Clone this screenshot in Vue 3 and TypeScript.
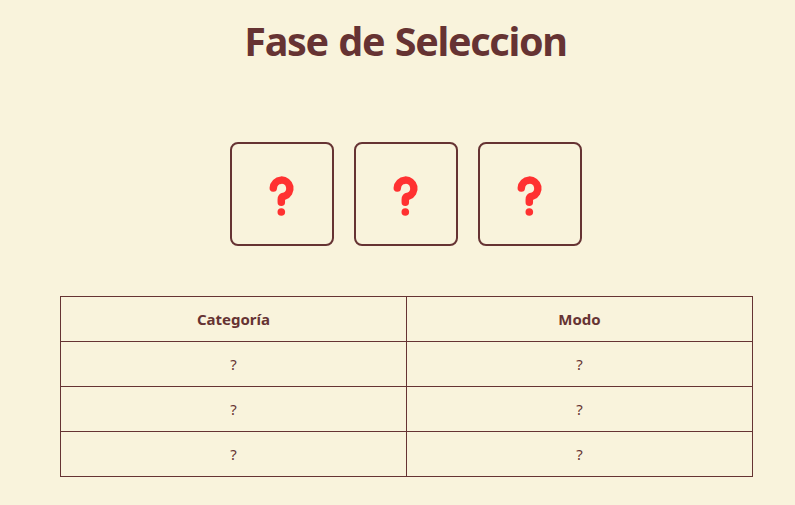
<script setup lang="ts">
interface Row {
  category: string
  mode: string
}

const slots: number[] = [1, 2, 3]
const rows: Row[] = [
  { category: '?', mode: '?' },
  { category: '?', mode: '?' },
  { category: '?', mode: '?' },
]
</script>

<template>
  <main class="page">
    <h1 class="title">Fase de Seleccion</h1>
    <div class="slots">
      <div v-for="slot in slots" :key="slot" class="slot">
        <svg class="question" viewBox="0 0 100 100" aria-hidden="true">
          <path d="M41.3 43.9 A8.3 8.3 0 1 1 52.2 52.3 Q49.3 52.8 49.3 55.6 V58.3" />
          <circle cx="49.3" cy="68" r="3.8" />
        </svg>
      </div>
    </div>
    <table class="table">
      <thead>
        <tr>
          <th>Categoría</th>
          <th>Modo</th>
        </tr>
      </thead>
      <tbody>
        <tr v-for="(row, index) in rows" :key="index">
          <td>{{ row.category }}</td>
          <td>{{ row.mode }}</td>
        </tr>
      </tbody>
    </table>
  </main>
</template>

<style>
body {
  background: #f9f3dc;
}
</style>

<style scoped>
.page {
  box-sizing: border-box;
  width: 795px;
  height: 505px;
  padding: 14px 42px 0 60px;
  background: #f9f3dc;
  color: #663333;
  font-family: "Segoe UI", "Noto Sans", "Open Sans", sans-serif;
}

.title {
  margin: 0;
  height: 54px;
  padding-right: 2px;
  line-height: 54px;
  font-size: 39.5px;
  font-weight: 700;
  letter-spacing: -1.3px;
  word-spacing: 1.5px;
  text-align: center;
  white-space: nowrap;
}

.slots {
  display: flex;
  justify-content: center;
  gap: 20px;
  margin: 74px 0 50px;
  padding-right: 1px;
}

.slot {
  box-sizing: border-box;
  width: 104px;
  height: 104px;
  border: 2px solid #663333;
  border-radius: 8px;
}

.question {
  display: block;
  width: 100px;
  height: 100px;
}

.question path {
  fill: none;
  stroke: #ff3131;
  stroke-width: 7.5;
  stroke-linecap: round;
  stroke-linejoin: round;
}

.question circle {
  fill: #ff3131;
}

.table {
  width: 693px;
  table-layout: fixed;
  border-collapse: collapse;
  font-size: 15px;
  text-align: center;
}

.table th,
.table td {
  box-sizing: border-box;
  height: 45px;
  padding: 0;
  border: 1px solid #663333;
  line-height: 20px;
}
</style>
